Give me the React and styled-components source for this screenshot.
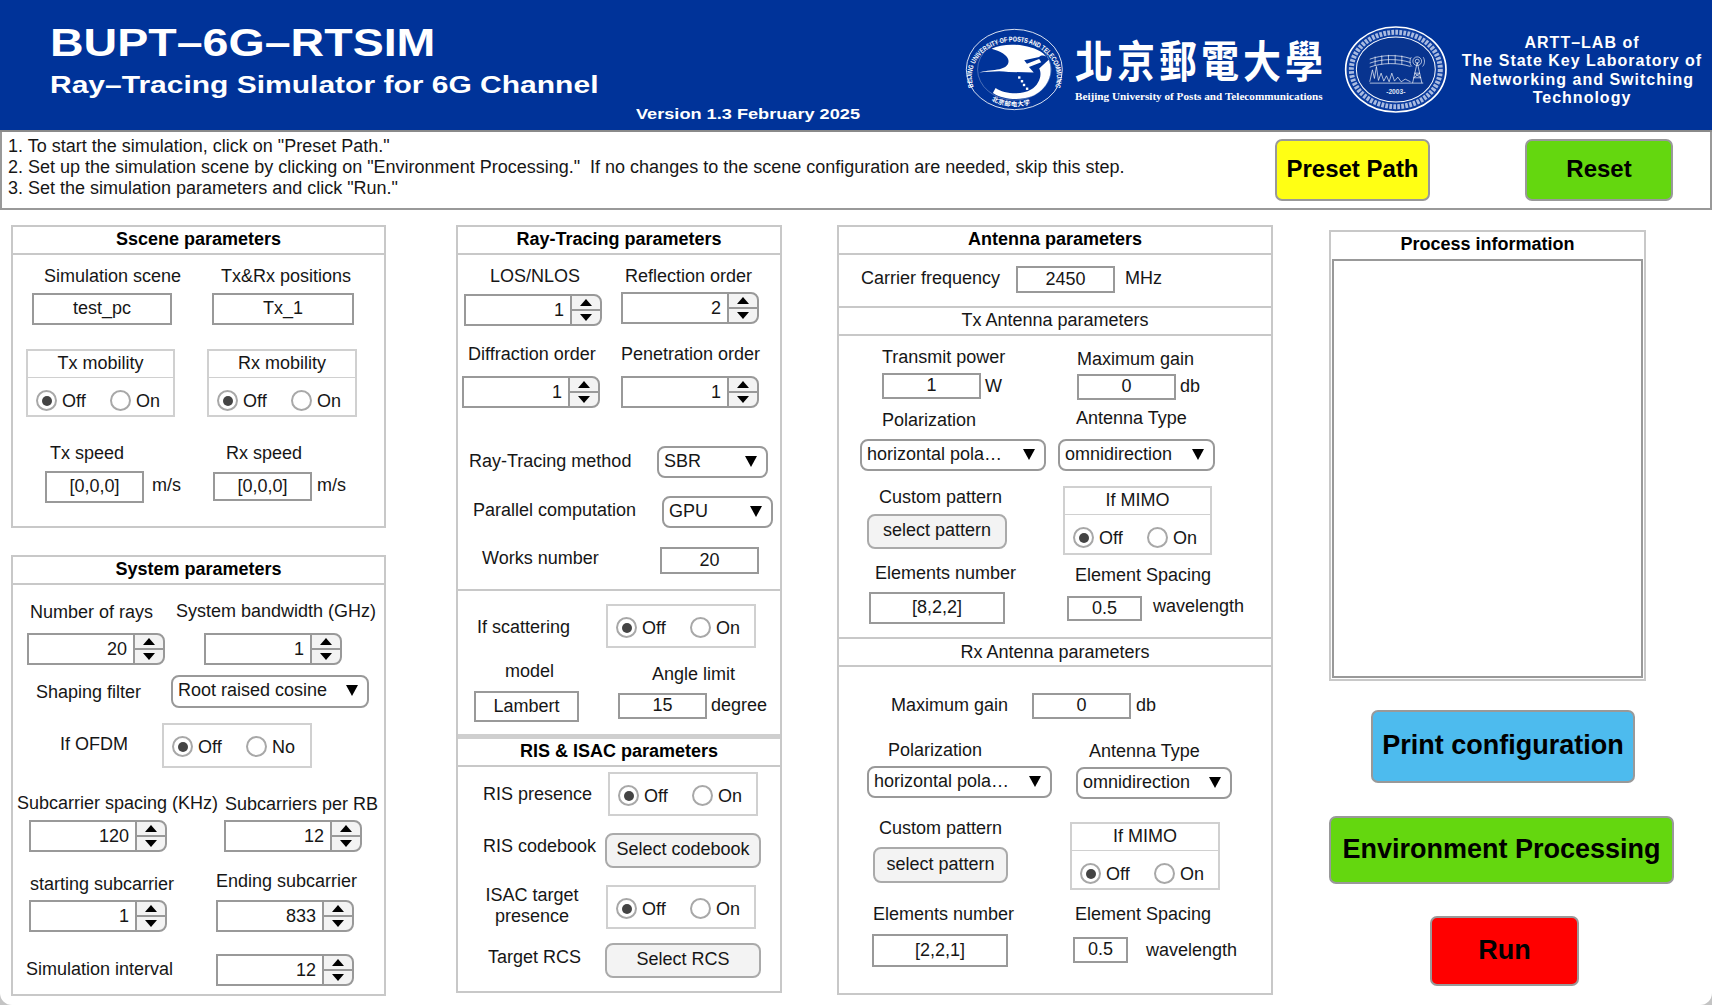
import React from 'react'
import styled, { createGlobalStyle, css } from 'styled-components'

const GlobalStyle = createGlobalStyle`
  html, body { margin: 0; padding: 0; background: #c4c4c4; }
  body { font-family: "Liberation Sans", Arial, sans-serif; font-size: 18px; color: #161616; }
  * { box-sizing: border-box; }
`

// nudges an item from where the flow puts it
const place = css`
  margin-left: ${p => p.$x || 0}px;
  margin-top: ${p => p.$y || 0}px;
`

const Page = styled.div`
  width: 1712px;
  height: 1005px;
  overflow: hidden;
  background: #fff;
  border-radius: 0 0 12px 12px;
`

/* ---------- banner ---------- */
const Banner = styled.header`
  height: 132px;
  background: #003399;
  border-bottom: 2px solid #8a8a8a;
  display: flex;
  align-items: flex-start;
  color: #fff;
  font-weight: 700;
`
const BannerLeft = styled.div`
  width: 966px;
  padding: 21px 0 0 50px;
  display: flex;
  flex-direction: column;
  align-items: flex-start;
`
const Title = styled.div`
  font-size: 38px;
  line-height: 44px;
  white-space: nowrap;
  transform: scaleX(1.225);
  transform-origin: left center;
`
const Subtitle = styled.div`
  margin-top: 6px;
  font-size: 24px;
  line-height: 28px;
  white-space: nowrap;
  transform: scaleX(1.25);
  transform-origin: left center;
`
const Version = styled.div`
  margin: 6px 0 0 586px;
  font-size: 15px;
  line-height: 18px;
  white-space: nowrap;
  transform: scaleX(1.21);
  transform-origin: left center;
`
const SealOne = styled.svg`
  width: 97px;
  height: 81px;
  margin-top: 29px;
  flex: none;
  overflow: visible;
`
const NameBlock = styled.div`
  width: 250px;
  margin: 36px 0 0 12px;
  flex: none;
`
const NameCjk = styled.div`
  font-family: "Noto Sans CJK TC", sans-serif;
  font-size: 38px;
  line-height: 46px;
  letter-spacing: 4px;
  white-space: nowrap;
  transform: scaleY(1.16);
`
const NameLatin = styled.div`
  margin-top: 8px;
  font-family: "Liberation Serif", serif;
  font-size: 11.2px;
  line-height: 12px;
  white-space: nowrap;
`
const SealTwo = styled.svg`
  width: 102px;
  height: 87px;
  margin: 26px 0 0 20px;
  flex: none;
  overflow: visible;
`
const LabBlock = styled.div`
  flex: 1;
  margin-left: 5px;
  padding-top: 34px;
  text-align: center;
  font-size: 16px;
  line-height: 18.3px;
  letter-spacing: 1px;
`

/* ---------- instructions ---------- */
const StepBar = styled.section`
  height: 78px;
  border: 2px solid #999;
  border-top: 0;
  display: flex;
  align-items: flex-start;
  line-height: 21px;
  background: #fff;
`
const Steps = styled.div`
  width: 1273px;
  padding: 4px 0 0 6px;
  white-space: pre;
`
const ActionButton = styled.button`
  ${place};
  display: block;
  flex: none;
  width: ${p => p.$w}px;
  height: ${p => p.$h}px;
  padding: 0 0 2px;
  border: 2px solid #999;
  border-radius: 7px;
  background: ${p => p.$bg};
  color: #000;
  font-family: inherit;
  font-weight: 700;
  font-size: ${p => p.$size || 27}px;
  white-space: nowrap;
`

/* ---------- panels ---------- */
const Main = styled.main`
  display: flex;
  align-items: flex-start;
  padding: 15px 0 0 11px;
`
const Column = styled.div`
  flex: none;
  width: ${p => p.$w}px;
  margin-left: ${p => p.$gap || 0}px;
`
const Panel = styled.section`
  width: ${p => p.$w}px;
  border: 2px solid #c8c8c8;
  margin-top: ${p => p.$top || 0}px;
  background: #fff;
`
const PanelTitle = styled.h2`
  margin: 0;
  height: 28px;
  border-bottom: 2px solid #c8c8c8;
  font-size: 18px;
  line-height: 24px;
  font-weight: 700;
  text-align: center;
  color: #000;
`
const SubTitle = styled.h3`
  margin: 0;
  height: 28px;
  padding-top: ${p => p.$drop || 0}px;
  border-bottom: 2px solid #c8c8c8;
  font-size: 18px;
  line-height: 25px;
  font-weight: 400;
  text-align: center;
`
const Section = styled.div`
  border-bottom: ${p => p.$rule || 2}px solid ${p => (p.$rule ? '#cfcfcf' : '#c8c8c8')};
`
const Row = styled.div`
  display: flex;
  align-items: flex-start;
  height: ${p => p.$h}px;
`
const Stack = styled.div`
  ${place};
  flex: none;
  width: ${p => p.$w}px;
`
const Caption = styled.div`
  ${place};
  flex: none;
  height: 20px;
  line-height: 20px;
  white-space: nowrap;
  ${p => p.$w && `width: ${p.$w}px;`}
`
const TwoLineCaption = styled.div`
  ${place};
  flex: none;
  width: ${p => p.$w}px;
  line-height: 21px;
  text-align: center;
`
const TextField = styled.div`
  ${place};
  flex: none;
  width: ${p => (p.$w ? `${p.$w}px` : '100%')};
  height: ${p => p.$h}px;
  border: 2px solid #999;
  background: #fff;
  text-align: center;
  line-height: ${p => p.$h - 5}px;
`

const SpinBox = styled.div`
  ${place};
  flex: none;
  display: flex;
  width: 138px;
  height: 32px;
`
const SpinValue = styled.div`
  flex: 1;
  border: 2px solid #999;
  border-right: 0;
  padding-right: 6px;
  text-align: right;
  line-height: 28px;
`
const SpinButtons = styled.div`
  width: 32px;
  display: flex;
  flex-direction: column;
  border: 2px solid #999;
  border-radius: 0 8px 8px 0;
  background: #f3f3f3;
`
const SpinPart = styled.div`
  flex: 1;
  display: flex;
  align-items: center;
  justify-content: center;
  & + & { border-top: 2px solid #999; }
`
const Tri = styled.i`
  display: block;
  width: 0;
  height: 0;
  border-left: 6.5px solid transparent;
  border-right: 6.5px solid transparent;
  ${p => (p.$up ? 'border-bottom: 7px solid #000;' : 'border-top: 7px solid #000;')}
`
const Spinner = ({ value, ...rest }) => (
  <SpinBox {...rest}>
    <SpinValue>{value}</SpinValue>
    <SpinButtons>
      <SpinPart><Tri $up /></SpinPart>
      <SpinPart><Tri /></SpinPart>
    </SpinButtons>
  </SpinBox>
)

const SelectBox = styled.div`
  ${place};
  flex: none;
  display: flex;
  align-items: center;
  justify-content: space-between;
  width: ${p => (p.$w ? `${p.$w}px` : '100%')};
  height: ${p => p.$h || 32}px;
  padding: 0 9px 2px 5px;
  border: 2px solid #999;
  border-radius: 8px;
  background: #fff;
  white-space: nowrap;
`
const Caret = styled.i`
  display: block;
  width: 0;
  height: 0;
  border-left: 6px solid transparent;
  border-right: 6px solid transparent;
  border-top: 11px solid #000;
`
const Dropdown = ({ value, ...rest }) => (
  <SelectBox {...rest}>
    {value}
    <Caret />
  </SelectBox>
)

const PlainButton = styled.button`
  ${place};
  display: block;
  flex: none;
  width: ${p => (p.$w ? `${p.$w}px` : '100%')};
  height: ${p => p.$h}px;
  padding: 0 0 2px;
  border: 2px solid #aaa;
  border-radius: 8px;
  background: #f3f3f3;
  color: #161616;
  font-family: inherit;
  font-size: 18px;
`

const RadioBox = styled.div`
  ${place};
  flex: none;
  width: ${p => p.$w}px;
  height: ${p => p.$h}px;
  border: 2px solid #d0d0d0;
  background: #fff;
`
const RadioTitle = styled.div`
  height: 27px;
  border-bottom: 1px solid #d0d0d0;
  line-height: 25px;
  text-align: center;
`
const RadioRow = styled.div`
  display: flex;
  align-items: center;
  padding-left: 8px;
  height: ${p => (p.$titled ? 37 : 41)}px;
  margin-top: ${p => (p.$titled ? 4 : 1)}px;
`
const Option = styled.label`
  flex: none;
  display: flex;
  align-items: center;
  gap: 5px;
  width: 74px;
  line-height: 20px;
`
const Dot = styled.span`
  flex: none;
  width: 21px;
  height: 21px;
  border: 2px solid #a8a8a8;
  border-radius: 50%;
  background: #fff;
  display: flex;
  align-items: center;
  justify-content: center;
  &::after {
    content: '';
    width: 10px;
    height: 10px;
    border-radius: 50%;
    background: ${p => (p.$on ? '#444' : 'transparent')};
  }
`
const OnOff = ({ title, second = 'On', ...rest }) => (
  <RadioBox {...rest}>
    {title && <RadioTitle>{title}</RadioTitle>}
    <RadioRow $titled={!!title}>
      <Option><Dot $on />Off</Option>
      <Option><Dot />{second}</Option>
    </RadioRow>
  </RadioBox>
)

/* ---------- right column ---------- */
const ProcessPanel = styled.section`
  width: 317px;
  height: 451px;
  margin-top: 5px;
  border: 2px solid #c8c8c8;
  display: flex;
  flex-direction: column;
`
const ProcessTitle = styled.h2`
  margin: 0;
  height: 27px;
  font-size: 18px;
  line-height: 24px;
  font-weight: 700;
  text-align: center;
  color: #000;
`
const ProcessLog = styled.div`
  flex: 1;
  margin: 0 1px 1px;
  border: 2px solid #999;
  background: #fff;
`

/* ---------- logos ---------- */
const BuptSeal = () => (
  <SealOne viewBox="25 30 285 238" preserveAspectRatio="none">
    <ellipse cx="167" cy="149" rx="141" ry="118" fill="none" stroke="#fff" strokeWidth="2.5" />
    <ellipse cx="167" cy="149" rx="108" ry="90" fill="none" stroke="#fff" strokeWidth="1.2" opacity=".7" />
    <path id="seal-top" d="M47 200 A125 104 0 1 1 287 200" fill="none" />
    <path id="seal-bottom" d="M100 240 A122 104 0 0 0 236 240" fill="none" />
    <text fill="#fff" fontSize="21" fontFamily="Liberation Sans">
      <textPath href="#seal-top" textLength="480" lengthAdjust="spacingAndGlyphs">BEIJING UNIVERSITY OF POSTS AND TELECOMMUNICATIONS</textPath>
    </text>
    <text fill="#fff" fontSize="19" fontFamily="Noto Sans CJK SC">
      <textPath href="#seal-bottom" textLength="118">北京邮电大学</textPath>
    </text>
    <path fill="#fff" d="M100 88 C140 68 215 74 252 102 L268 118 C262 108 248 104 240 112 L196 122 L204 132 L240 118 L246 128 L210 142 L224 158 L150 156 C120 152 90 156 64 158 C90 148 150 156 150 124 C150 108 124 94 100 88Z" />
    <path fill="#fff" d="M268 120 C288 170 254 236 172 236 C148 236 122 230 104 218 L112 203 C136 220 186 226 216 208 C240 194 250 164 240 146Z" />
    <g fill="#fff">
      <rect x="178" y="169" width="7" height="7" />
      <rect x="186" y="180" width="7" height="7" />
      <rect x="192" y="191" width="7" height="7" />
      <rect x="201" y="202" width="7" height="7" />
    </g>
  </SealOne>
)

const LabSeal = () => (
  <SealTwo viewBox="30 18 305 262" preserveAspectRatio="none">
    <ellipse cx="182" cy="149" rx="150" ry="128" fill="#0a3b9e" stroke="#fff" strokeWidth="5" />
    <ellipse cx="182" cy="149" rx="133" ry="112" fill="none" stroke="#dfe6f5" strokeWidth="15" strokeDasharray="8 4" opacity=".75" />
    <ellipse cx="182" cy="149" rx="118" ry="98" fill="#08348f" stroke="#fff" strokeWidth="3" />
    <g fill="none" stroke="#fff" strokeWidth="2">
      <path d="M104 118 C140 104 190 104 226 116" />
      <path d="M104 130 C140 116 190 116 226 128" />
      <path d="M104 142 C140 128 190 128 226 140" />
      <path d="M120 110 V138 M140 107 V134 M160 105 V132 M180 105 V132 M200 107 V134" />
      <path d="M104 186 L112 150 L118 176 L124 140 L130 182 L138 160 L146 184 L154 168 L162 186 L170 160 L178 184 L188 172 L198 186 L210 178 L226 186" />
      <path d="M104 190 H264" />
      <path d="M246 128 L232 190 M246 128 L260 190 M238 160 H254 M235 174 H257 M238 160 L257 174 M254 160 L235 174" />
      <circle cx="246" cy="124" r="6" />
      <circle cx="246" cy="124" r="13" />
      <path d="M228 112 C222 122 224 134 230 140 M264 112 C270 122 268 134 262 140" />
    </g>
    <text x="182" y="224" textAnchor="middle" fill="#dfe6f5" fontSize="20" fontFamily="Liberation Sans">-2003-</text>
  </SealTwo>
)

export default function App() {
  return (
    <Page>
      <GlobalStyle />
      <Banner>
        <BannerLeft>
          <Title>BUPT–6G–RTSIM</Title>
          <Subtitle>Ray–Tracing Simulator for 6G Channel</Subtitle>
          <Version>Version 1.3 February 2025</Version>
        </BannerLeft>
        <BuptSeal />
        <NameBlock>
          <NameCjk>北京郵電大學</NameCjk>
          <NameLatin>Beijing University of Posts and Telecommunications</NameLatin>
        </NameBlock>
        <LabSeal />
        <LabBlock>
          ARTT–LAB of<br />
          The State Key Laboratory of<br />
          Networking and Switching<br />
          Technology
        </LabBlock>
      </Banner>

      <StepBar>
        <Steps>
          1. To start the simulation, click on "Preset Path."{'\n'}
          2. Set up the simulation scene by clicking on "Environment Processing."  If no changes to the scene configuration are needed, skip this step.{'\n'}
          3. Set the simulation parameters and click "Run."
        </Steps>
        <ActionButton $bg="#ffff14" $w={155} $h={62} $size={24} $y={7}>Preset Path</ActionButton>
        <ActionButton $bg="#64d70f" $w={148} $h={62} $size={24} $x={95} $y={7}>Reset</ActionButton>
      </StepBar>

      <Main>
        <Column $w={375}>
          <Panel $w={375}>
            <PanelTitle>Sscene parameters</PanelTitle>
            <Row $h={75}>
              <Stack $x={19} $w={140}>
                <Caption $x={12} $y={11}>Simulation scene</Caption>
                <TextField $y={7} $h={32}>test_pc</TextField>
              </Stack>
              <Stack $x={40} $w={142}>
                <Caption $x={9} $y={11}>Tx&amp;Rx positions</Caption>
                <TextField $y={7} $h={32}>Tx_1</TextField>
              </Stack>
            </Row>
            <Row $h={90}>
              <OnOff title="Tx mobility" $x={13} $y={19} $w={149} $h={68} />
              <OnOff title="Rx mobility" $x={32} $y={19} $w={150} $h={68} />
            </Row>
            <Row $h={106}>
              <Stack $x={32} $w={99}>
                <Caption $x={5} $y={23}>Tx speed</Caption>
                <TextField $y={8} $h={32}>[0,0,0]</TextField>
              </Stack>
              <Caption $x={8} $y={55} $w={28}>m/s</Caption>
              <Stack $x={33} $w={99}>
                <Caption $x={13} $y={23}>Rx speed</Caption>
                <TextField $y={9} $h={29}>[0,0,0]</TextField>
              </Stack>
              <Caption $x={5} $y={55}>m/s</Caption>
            </Row>
          </Panel>

          <Panel $w={375} $top={27}>
            <PanelTitle>System parameters</PanelTitle>
            <Row $h={85}>
              <Stack $x={14} $w={138}>
                <Caption $x={3} $y={17}>Number of rays</Caption>
                <Spinner value="20" $y={11} />
              </Stack>
              <Stack $x={39} $w={138}>
                <Caption $x={-28} $y={16}>System bandwidth (GHz)</Caption>
                <Spinner value="1" $y={12} />
              </Stack>
            </Row>
            <Row $h={45}>
              <Caption $x={23} $y={12} $w={105}>Shaping filter</Caption>
              <Dropdown value="Root raised cosine" $x={30} $y={5} $w={198} $h={33} />
            </Row>
            <Row $h={65}>
              <Caption $x={47} $y={19} $w={68}>If OFDM</Caption>
              <OnOff second="No" $x={34} $y={8} $w={150} $h={45} />
            </Row>
            <Row $h={82}>
              <Stack $x={16} $w={138}>
                <Caption $x={-12} $y={13}>Subcarrier spacing (KHz)</Caption>
                <Spinner value="120" $y={7} />
              </Stack>
              <Stack $x={57} $w={138}>
                <Caption $x={1} $y={14}>Subcarriers per RB</Caption>
                <Spinner value="12" $y={6} />
              </Stack>
            </Row>
            <Row $h={78}>
              <Stack $x={16} $w={138}>
                <Caption $x={1} $y={12}>starting subcarrier</Caption>
                <Spinner value="1" $y={6} />
              </Stack>
              <Stack $x={49} $w={138}>
                <Caption $y={9}>Ending subcarrier</Caption>
                <Spinner value="833" $y={9} />
              </Stack>
            </Row>
            <Row $h={54}>
              <Caption $x={13} $y={19} $w={146}>Simulation interval</Caption>
              <Spinner value="12" $x={44} $y={14} />
            </Row>
          </Panel>
        </Column>

        <Column $w={326} $gap={70}>
          <Panel $w={326}>
            <PanelTitle>Ray-Tracing parameters</PanelTitle>
            <Section>
              <Row $h={75}>
                <Stack $x={6} $w={138}>
                  <Caption $x={26} $y={11}>LOS/NLOS</Caption>
                  <Spinner value="1" $y={8} />
                </Stack>
                <Stack $x={19} $w={138}>
                  <Caption $x={4} $y={11}>Reflection order</Caption>
                  <Spinner value="2" $y={6} />
                </Stack>
              </Row>
              <Row $h={100}>
                <Stack $x={4} $w={138}>
                  <Caption $x={6} $y={14}>Diffraction order</Caption>
                  <Spinner value="1" $y={12} />
                </Stack>
                <Stack $x={21} $w={138}>
                  <Caption $y={14}>Penetration order</Caption>
                  <Spinner value="1" $y={12} />
                </Stack>
              </Row>
              <Row $h={57}>
                <Caption $x={11} $y={21} $w={162}>Ray-Tracing method</Caption>
                <Dropdown value="SBR" $x={26} $y={16} $w={111} />
              </Row>
              <Row $h={50}>
                <Caption $x={15} $y={13} $w={162}>Parallel computation</Caption>
                <Dropdown value="GPU" $x={27} $y={9} $w={111} />
              </Row>
              <Row $h={52}>
                <Caption $x={24} $y={11} $w={116}>Works number</Caption>
                <TextField $x={62} $y={10} $w={99} $h={27}>20</TextField>
              </Row>
            </Section>
            <Section $rule={5}>
              <Row $h={69}>
                <Caption $x={19} $y={26} $w={93}>If scattering</Caption>
                <OnOff $x={36} $y={13} $w={150} $h={44} />
              </Row>
              <Row $h={74}>
                <Stack $x={16} $w={105}>
                  <Caption $x={31} $y={1}>model</Caption>
                  <TextField $y={10} $h={31}>Lambert</TextField>
                </Stack>
                <Stack $x={39} $w={89}>
                  <Caption $x={34} $y={4}>Angle limit</Caption>
                  <TextField $y={9} $h={26}>15</TextField>
                </Stack>
                <Caption $x={4} $y={35}>degree</Caption>
              </Row>
            </Section>
            <PanelTitle>RIS &amp; ISAC parameters</PanelTitle>
            <Row $h={58}>
              <Caption $x={25} $y={17} $w={109}>RIS presence</Caption>
              <OnOff $x={16} $y={5} $w={150} $h={44} />
            </Row>
            <Row $h={55}>
              <Caption $x={25} $y={11} $w={112}>RIS codebook</Caption>
              <PlainButton $x={10} $y={8} $w={156} $h={35}>Select codebook</PlainButton>
            </Row>
            <Row $h={55}>
              <TwoLineCaption $x={18} $y={5} $w={112}>ISAC target<br />presence</TwoLineCaption>
              <OnOff $x={18} $y={5} $w={150} $h={44} />
            </Row>
            <Row $h={56}>
              <Caption $x={30} $y={12} $w={92}>Target RCS</Caption>
              <PlainButton $x={25} $y={8} $w={156} $h={35}>Select RCS</PlainButton>
            </Row>
          </Panel>
        </Column>

        <Column $w={436} $gap={55}>
          <Panel $w={436}>
            <PanelTitle>Antenna parameters</PanelTitle>
            <Section>
              <Row $h={51}>
                <Caption $x={22} $y={13} $w={139}>Carrier frequency</Caption>
                <TextField $x={16} $y={11} $w={99} $h={27}>2450</TextField>
                <Caption $x={10} $y={13}>MHz</Caption>
              </Row>
            </Section>
            <SubTitle>Tx Antenna parameters</SubTitle>
            <Section>
              <Row $h={69}>
                <Stack $x={43} $w={99}>
                  <Caption $y={11}>Transmit power</Caption>
                  <TextField $y={6} $h={26}>1</TextField>
                </Stack>
                <Caption $x={4} $y={40} $w={17}>W</Caption>
                <Stack $x={75} $w={99}>
                  <Caption $y={13}>Maximum gain</Caption>
                  <TextField $y={5} $h={26}>0</TextField>
                </Stack>
                <Caption $x={4} $y={40}>db</Caption>
              </Row>
              <Row $h={75}>
                <Stack $x={21} $w={186}>
                  <Caption $x={22} $y={5}>Polarization</Caption>
                  <Dropdown value="horizontal pola…" $y={9} />
                </Stack>
                <Stack $x={12} $w={157}>
                  <Caption $x={18} $y={3}>Antenna Type</Caption>
                  <Dropdown value="omnidirection" $y={11} />
                </Stack>
              </Row>
              <Row $h={80}>
                <Stack $x={28} $w={140}>
                  <Caption $x={12} $y={7}>Custom pattern</Caption>
                  <PlainButton $y={7} $h={35}>select pattern</PlainButton>
                </Stack>
                <OnOff title="If MIMO" $x={56} $y={6} $w={149} $h={69} />
              </Row>
              <Row $h={77}>
                <Stack $x={30} $w={136}>
                  <Caption $x={6} $y={3}>Elements number</Caption>
                  <TextField $y={9} $h={32}>[8,2,2]</TextField>
                </Stack>
                <Stack $x={62} $w={75}>
                  <Caption $x={8} $y={5}>Element Spacing</Caption>
                  <TextField $y={11} $h={25}>0.5</TextField>
                </Stack>
                <Caption $x={11} $y={36}>wavelength</Caption>
              </Row>
            </Section>
            <SubTitle $drop={1}>Rx Antenna parameters</SubTitle>
            <Row $h={73}>
              <Caption $x={52} $y={28} $w={116}>Maximum gain</Caption>
              <TextField $x={25} $y={26} $w={99} $h={26}>0</TextField>
              <Caption $x={5} $y={28}>db</Caption>
            </Row>
            <Row $h={70}>
              <Stack $x={28} $w={185}>
                <Caption $x={21}>Polarization</Caption>
                <Dropdown value="horizontal pola…" $y={6} />
              </Stack>
              <Stack $x={24} $w={156}>
                <Caption $x={13} $y={1}>Antenna Type</Caption>
                <Dropdown value="omnidirection" $y={6} />
              </Stack>
            </Row>
            <Row $h={90}>
              <Stack $x={34} $w={135}>
                <Caption $x={6} $y={8}>Custom pattern</Caption>
                <PlainButton $y={9} $h={36}>select pattern</PlainButton>
              </Stack>
              <OnOff title="If MIMO" $x={62} $y={12} $w={150} $h={68} />
            </Row>
            <Row $h={93}>
              <Stack $x={33} $w={136}>
                <Caption $x={1} $y={4}>Elements number</Caption>
                <TextField $y={10} $h={33}>[2,2,1]</TextField>
              </Stack>
              <Stack $x={65} $w={55}>
                <Caption $x={2} $y={4}>Element Spacing</Caption>
                <TextField $y={13} $h={26}>0.5</TextField>
              </Stack>
              <Caption $x={18} $y={40}>wavelength</Caption>
            </Row>
          </Panel>
        </Column>

        <Column $w={345} $gap={56}>
          <ProcessPanel>
            <ProcessTitle>Process information</ProcessTitle>
            <ProcessLog />
          </ProcessPanel>
          <ActionButton $bg="#4dbbee" $w={264} $h={73} $x={42} $y={29}>Print configuration</ActionButton>
          <ActionButton $bg="#64d70f" $w={345} $h={68} $y={33}>Environment Processing</ActionButton>
          <ActionButton $bg="#ff0000" $w={149} $h={70} $x={101} $y={32}>Run</ActionButton>
        </Column>
      </Main>
    </Page>
  )
}
